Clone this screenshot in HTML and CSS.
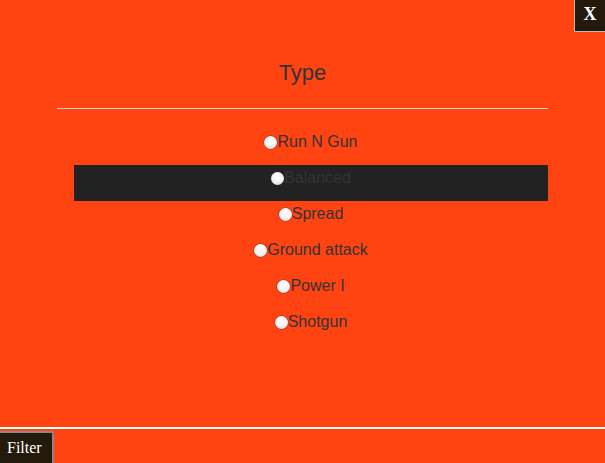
FILE: index.html
```html
<!DOCTYPE html>
<html>
<head>
<meta charset="utf-8">
<link rel="stylesheet" href="styles.css">
</head>
<body>
<div class="page">
  <button class="close">X</button>
  <div class="panel">
    <h2 class="title">Type</h2>
    <hr class="rule">
    <ul class="options">
      <li class="option"><label><input type="radio" name="type">Run N Gun</label></li>
      <li class="option active"><label><input type="radio" name="type">Balanced</label></li>
      <li class="option"><label><input type="radio" name="type">Spread</label></li>
      <li class="option"><label><input type="radio" name="type">Ground attack</label></li>
      <li class="option"><label><input type="radio" name="type">Power I</label></li>
      <li class="option"><label><input type="radio" name="type">Shotgun</label></li>
    </ul>
  </div>
  <div class="footer">
    <button class="filter">Filter</button>
  </div>
</div>
</body>
</html>
```
FILE: styles.css
```css
html, body {
  margin: 0;
  padding: 0;
  background: #ff4412;
}
.page {
  position: relative;
  width: 605px;
  height: 463px;
  overflow: hidden;
  background: #ff4412;
  font-family: "Liberation Sans", Arial, sans-serif;
  color: #333;
}
.close {
  position: absolute;
  top: 0;
  right: 0;
  width: 31px;
  height: 32px;
  margin: 0;
  padding: 0 0 2px 0;
  background: #231a0b;
  color: #fff;
  border: none;
  border-left: 1px solid #b8b8b8;
  border-bottom: 1px solid #b8b8b8;
  font-family: "Liberation Serif", "Times New Roman", serif;
  font-weight: bold;
  font-size: 18px;
  box-sizing: border-box;
}
.panel {
  margin-left: 57px;
  width: 491px;
  padding-top: 60px;
  height: 367px;
  box-sizing: border-box;
}
.title {
  margin: 0;
  font-size: 22px;
  font-weight: normal;
  text-align: center;
  line-height: 26px;
  height: 48px;
}
.rule {
  margin: 0;
  border: none;
  height: 1px;
  background: #f9d3c6;
}
.options {
  list-style: none;
  margin: 20px 0 0 17px;
  padding: 0;
}
.option {
  height: 36px;
  padding-top: 4px;
  box-sizing: border-box;
  text-align: center;
  font-size: 16px;
  line-height: 18px;
}
.option.active {
  background: #222;
}
.option label {
  display: inline-flex;
  align-items: baseline;
}
.option input {
  -webkit-appearance: none;
  appearance: none;
  width: 13px;
  height: 13px;
  margin: 0;
  border-radius: 50%;
  background: radial-gradient(circle at 50% 35%, #ffffff 0%, #f4f4f4 50%, #cfcfcf 100%);
  box-shadow: 0 0 0 0.5px rgba(90, 30, 10, 0.6);
  position: relative;
  top: 2px;
}
.footer {
  position: absolute;
  left: 0;
  right: 0;
  top: 427px;
  bottom: 0;
  border-top: 2px solid #fff;
}
.filter {
  display: block;
  margin: 2px 0 0 0;
  width: 54px;
  height: 32px;
  padding: 0 0 0 7px;
  background: #231a0b;
  color: #fff;
  border: none;
  border-top: 2px solid #888;
  border-right: 2px solid #888;
  box-sizing: border-box;
  font-family: "Liberation Serif", "Times New Roman", serif;
  font-size: 16px;
  text-align: left;
}
```
